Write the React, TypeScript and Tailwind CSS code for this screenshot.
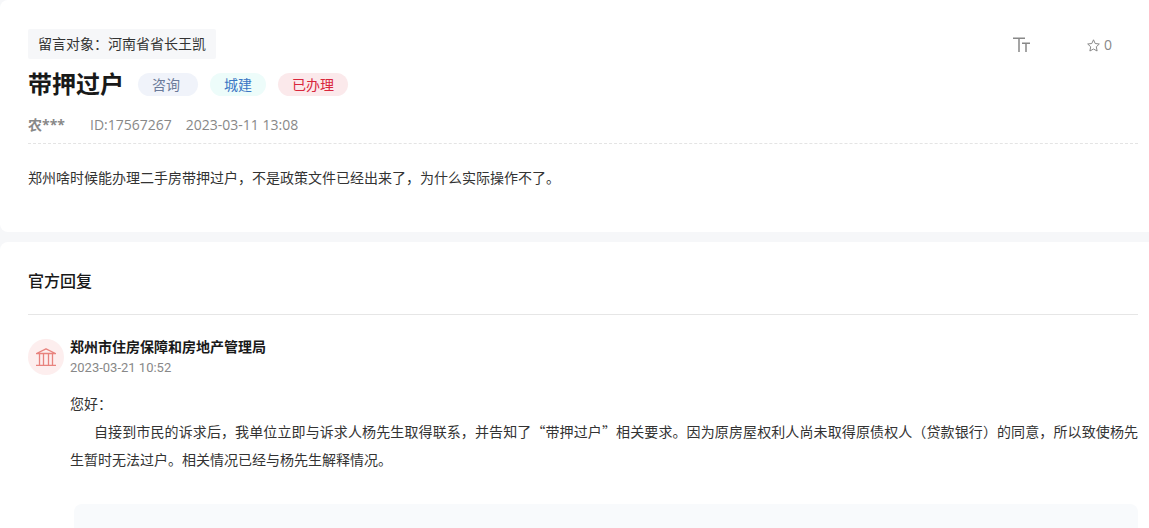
import React from "react";

type TagProps = { children: React.ReactNode; className: string };

function Tag({ children, className }: TagProps) {
  return (
    <span className={`rounded-full pl-3.5 text-sm leading-[23px] ${className}`}>{children}</span>
  );
}

function FontSizeIcon() {
  return (
    <svg width="18" height="16" viewBox="0 0 18 16" fill="none" stroke="currentColor" strokeWidth="1.5" aria-hidden="true">
      <path d="M0 1.3H12M6 1.3V15" />
      <path d="M9 6.3H17M13 6.3V15" />
    </svg>
  );
}

function StarIcon() {
  return (
    <svg width="13" height="13" viewBox="0 0 13 13" fill="none" stroke="currentColor" strokeLinejoin="round" aria-hidden="true">
      <path d="M6.5 0.8L8.2 4.5L12.3 5L9.3 7.8L10.1 12L6.5 10L2.9 12L3.7 7.8L0.7 5L4.8 4.5Z" />
    </svg>
  );
}

function BankIcon() {
  return (
    <svg width="20" height="18" viewBox="0 0 20 18" fill="none" stroke="#e8837e" strokeWidth="1.3" aria-hidden="true">
      <path d="M0.5 5.5L10 0.8L19.5 5.5Z" strokeLinejoin="round" />
      <path d="M3.5 5.5V17M7.5 5.5V17M12.5 5.5V17M16.5 5.5V17M0 17.3H20" />
    </svg>
  );
}

export default function App() {
  return (
    <div className="flex h-screen flex-col gap-2.5 overflow-hidden bg-[#f6f7f9] font-['Noto_Sans_CJK_SC',sans-serif] text-sm text-[#333]">
      <section className="rounded-l-lg bg-white pt-[29px] pr-[11px] pb-10 pl-7">
        <header className="flex items-start justify-between">
          <p className="rounded-xs bg-[#f6f7f9] px-2.5 pb-0.5 leading-7">留言对象：河南省省长王凯</p>
          <div className="flex items-center gap-14 pt-1 pr-[26px] text-[#888]">
            <button type="button" aria-label="字号" className="flex">
              <FontSizeIcon />
            </button>
            <button type="button" aria-label="收藏" className="flex items-center gap-1 font-['Open_Sans',sans-serif] leading-6">
              <StarIcon />
              <span>0</span>
            </button>
          </div>
        </header>
        <div className="mt-1 flex items-center">
          <h1 className="text-2xl leading-10 font-bold text-[#191919]">带押过户</h1>
          <div className="ml-3.5 flex gap-3 pt-[3px]">
            <Tag className="bg-[#f0f3fa] pr-[18px] text-[#6b7a99]">咨询</Tag>
            <Tag className="bg-[#edfcfa] pr-3.5 text-[#3a76c4]">城建</Tag>
            <Tag className="bg-[#fbe9eb] pr-3.5 text-[#d9263c]">已办理</Tag>
          </div>
        </div>
        <div className="mt-[9px] flex border-b border-dashed border-[#e4e4e4] pb-[5px] font-['Open_Sans','Noto_Sans_CJK_SC',sans-serif] text-sm leading-[26px] text-[#888]">
          <span className="w-[62px] font-bold">农***</span>
          <span>ID:17567267</span>
          <time className="ml-3.5">2023-03-11 13:08</time>
        </div>
        <p className="mt-[19px] mb-px leading-7">郑州啥时候能办理二手房带押过户，不是政策文件已经出来了，为什么实际操作不了。</p>
      </section>

      <section className="grow rounded-tl-lg bg-white pr-[11px] pl-7">
        <h2 className="border-b border-[#e6e6e6] pt-[22px] pb-[18px] text-base leading-8 font-medium text-[#191919]">官方回复</h2>
        <article className="mt-6 flex gap-1.5">
          <div className="flex size-9 shrink-0 items-center justify-center rounded-full bg-[#fdeeee]">
            <BankIcon />
          </div>
          <div className="min-w-0 grow">
            <h3 className="-mt-[3px] leading-5 font-bold text-[#191919]">郑州市住房保障和房地产管理局</h3>
            <time className="mt-0.5 block font-[Roboto,sans-serif] text-[13px] leading-5 text-[#888]">2023-03-21 10:52</time>
            <div className="mt-[11px] text-justify leading-7">
              <p>您好：</p>
              <p className="indent-6">
                自接到市民的诉求后，我单位立即与诉求人杨先生取得联系，并告知了“带押过户”相关要求。因为原房屋权利人尚未取得原债权人（贷款银行）的同意，所以致使杨先生暂时无法过户。相关情况已经与杨先生解释情况。
              </p>
            </div>
            <div className="mt-[31px] ml-1 h-40 rounded-lg bg-[#f8fafc]" />
          </div>
        </article>
      </section>
    </div>
  );
}
